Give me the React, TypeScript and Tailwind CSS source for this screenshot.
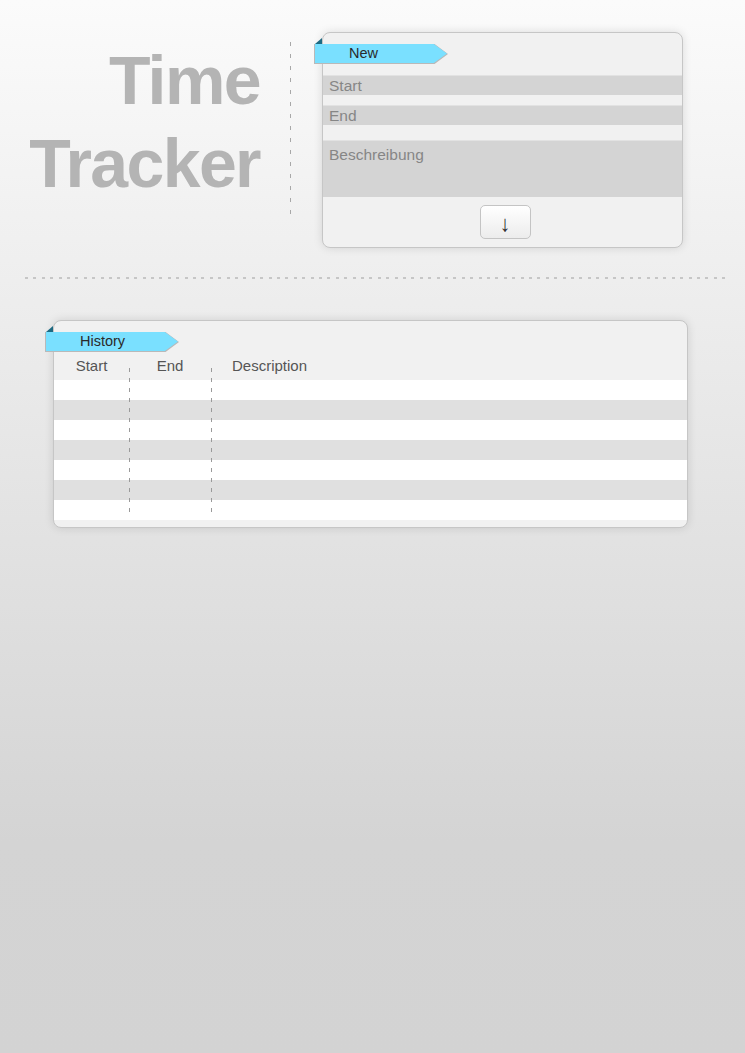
import React from "react";

const font = { fontFamily: '"Liberation Sans", Arial, sans-serif' };

const Ribbon = ({ label }: { label: string }) => {
    return (
        <div className="relative mt-[11px] -ml-[9px] h-[20px] w-[134px]">
            {/* folded corner */}
            <div className="absolute left-[1px] -top-[6px] h-[6px] w-[7px] bg-[#1d6a82] [clip-path:polygon(0_100%,100%_0,100%_100%)]" />
            <div className="flex h-full w-full items-center bg-[#b9b9b9] [clip-path:polygon(0_0,90%_0,100%_50%,90%_100%,0_100%)]">
                <div className="ml-[1px] flex h-[19px] w-[132px] -mt-[1px] items-center bg-[#7ae0ff] pl-[34px] text-[14.5px] text-[#2a2a2a] [clip-path:polygon(0_0,90%_0,100%_50%,90%_100%,0_100%)]">
                    {label}
                </div>
            </div>
        </div>
    );
};

const App = () => {
    const rows = [0, 1, 2, 3, 4, 5, 6];
    return (
        <div
            style={font}
            className="min-h-[1053px] w-full bg-[linear-gradient(to_bottom,#fbfbfb_0%,#d4d4d4_80%,#d3d3d3_100%)]"
        >
            {/* top */}
            <div className="flex items-start pt-[32px]">
                <div className="mt-[7px] w-[260px] text-right text-[68px] font-bold leading-[83px] tracking-[-1.6px] text-[#b4b4b4]">
                    <div>Time</div>
                    <div>Tracker</div>
                </div>
                <div className="ml-[30px] mt-[10px] h-[172px] w-px bg-[repeating-linear-gradient(to_bottom,#a8a8a8_0_4px,transparent_4px_12px)]" />
                <div className="ml-[31px] flex h-[216px] w-[361px] flex-col rounded-[8px] border border-[#c6c6c6] bg-[#f1f1f1] shadow-[0_0_10px_rgba(0,0,0,0.12)]">
                    <Ribbon label="New" />
                    <div className="mt-[11px] flex h-[20px] items-center border-t border-[#e2e2e2] bg-[#d4d4d4] pl-[6px] text-[15.5px] text-[#868686]">
                        Start
                    </div>
                    <div className="mt-[10px] flex h-[20px] items-center border-t border-[#e2e2e2] bg-[#d4d4d4] pl-[6px] text-[15.5px] text-[#868686]">
                        End
                    </div>
                    <div className="mt-[15px] h-[57px] border-t border-[#e2e2e2] bg-[#d4d4d4] pl-[6px] pt-[2px] text-[15.5px] text-[#868686]">
                        Beschreibung
                    </div>
                    <div className="mt-[8px] flex justify-center">
                        <button className="ml-[5px] flex h-[34px] w-[51px] items-center justify-center rounded-[5px] border border-[#c4c4c4] bg-[linear-gradient(to_bottom,#ffffff,#ececec)] pt-[2px] text-[22px] font-light text-[#333]">
                            ↓
                        </button>
                    </div>
                </div>
            </div>

            {/* divider */}
            <div className="ml-[25px] mt-[29px] h-[2px] w-[700px] bg-[repeating-linear-gradient(to_right,#c6c6c6_0_3px,transparent_3px_8.4px)]" />

            {/* history */}
            <div className="ml-[53px] mt-[41px] w-[635px] rounded-[8px] border border-[#c6c6c6] bg-[#f1f1f1] pb-[7px] shadow-[0_0_10px_rgba(0,0,0,0.12)]">
                <Ribbon label="History" />
                <div className="relative">
                    <div className="flex h-[28px] items-center text-[15px] text-[#555]">
                        <div className="w-[75px] text-center">Start</div>
                        <div className="w-[82px] text-center">End</div>
                        <div className="pl-[21px]">Description</div>
                    </div>
                    {rows.map((r) => (
                        <div key={r} className={r % 2 === 0 ? "h-[20px] bg-white" : "h-[20px] bg-[#e0e0e0]"} />
                    ))}
                    <div className="absolute left-[75px] top-[16px] bottom-[3px] w-px bg-[repeating-linear-gradient(to_bottom,#9a9a9a_0_4px,transparent_4px_10px)]" />
                    <div className="absolute left-[157px] top-[16px] bottom-[3px] w-px bg-[repeating-linear-gradient(to_bottom,#9a9a9a_0_4px,transparent_4px_10px)]" />
                </div>
            </div>
        </div>
    );
};

export default App;
